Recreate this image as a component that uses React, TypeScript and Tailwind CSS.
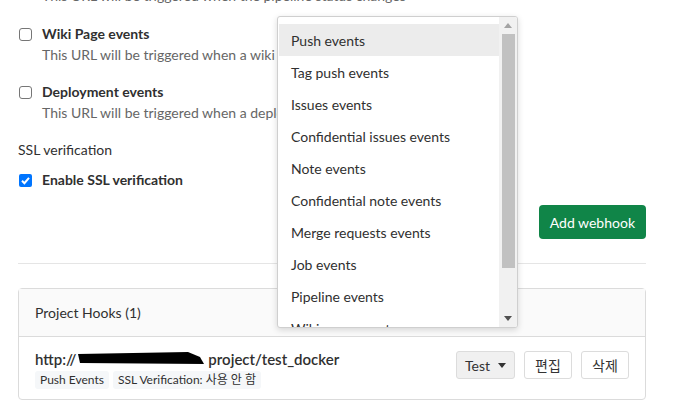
import React from "react";

const font = { fontFamily: 'Lato, "Noto Sans CJK KR", sans-serif' };

function Box({ checked }: { checked?: boolean }) {
  if (checked) {
    return (
      <span className="w-[13px] h-[13px] rounded-[2px] bg-[#0075ff] flex items-center justify-center shrink-0">
        <svg width="11" height="11" viewBox="0 0 11 11">
          <path d="M2 5.8 L4.4 8.2 L9 2.8" stroke="white" strokeWidth="2" fill="none" />
        </svg>
      </span>
    );
  }
  return <span className="w-[13px] h-[13px] rounded-[3px] border border-[#767676] bg-white shrink-0" />;
}

const items = [
  "Push events",
  "Tag push events",
  "Issues events",
  "Confidential issues events",
  "Note events",
  "Confidential note events",
  "Merge requests events",
  "Job events",
  "Pipeline events",
  "Wiki page events",
];

export default function App() {
  return (
    <div className="relative w-[673px] h-[416px] overflow-hidden bg-white text-[14px] text-[#303030]" style={font}>
      <div className="px-[18px] w-[664px]">
        <div className="mt-[-14px] h-[20px] leading-[20px] pl-[24px] text-[#666]">
          This URL will be triggered when the pipeline status changes
        </div>
        <div className="mt-[18px] flex items-center gap-[10px] pl-[1px] h-[20px]">
          <Box />
          <span className="font-bold leading-[20px]">Wiki Page events</span>
        </div>
        <div className="pl-[24px] h-[21px] leading-[21px] text-[#666]">
          This URL will be triggered when a wiki page is created/updated
        </div>
        <div className="mt-[17px] flex items-center gap-[10px] pl-[1px] h-[20px]">
          <Box />
          <span className="font-bold leading-[20px]">Deployment events</span>
        </div>
        <div className="pl-[24px] h-[21px] leading-[21px] text-[#666]">
          This URL will be triggered when a deployment starts
        </div>
        <div className="mt-[17px] h-[20px] leading-[20px]">SSL verification</div>
        <div className="mt-[10px] flex items-center gap-[10px] pl-[1px] h-[20px]">
          <Box checked />
          <span className="font-bold leading-[20px]">Enable SSL verification</span>
        </div>
        <div className="mt-[15px] flex justify-end">
          <button className="h-[34px] px-[11px] rounded-[4px] bg-[#108548] text-white text-[14px]">
            Add webhook
          </button>
        </div>
        <div className="mt-[24px] border-t border-[#e5e5e5]" />
        <div className="mt-[24px] border border-[#dbdbdb] rounded-[4px]">
          <div className="h-[48px] bg-[#fafafa] border-b border-[#dbdbdb] flex items-center px-[16px]">
            Project Hooks (1)
          </div>
          <div className="flex items-center justify-between px-[16px] pt-[12px] pb-[10px]">
            <div>
              <div className="flex items-center h-[20px] font-semibold text-[15px]">
                <span>http://</span>
                <svg width="132" height="20" viewBox="0 0 132 20" className="shrink-0">
                  <path d="M2 5 L112 3 L124 8 L128 15 L4 14 Z" fill="black" />
                </svg>
                <span>project/test_docker</span>
              </div>
              <div className="flex gap-[4px] mt-[2px] text-[12px]">
                <span className="bg-[#f5f7f9] rounded-[3px] px-[5px] h-[18px] leading-[18px]">Push Events</span>
                <span className="bg-[#f5f7f9] rounded-[3px] px-[5px] h-[18px] leading-[18px]">SSL Verification: 사용 안 함</span>
              </div>
            </div>
            <div className="flex items-center gap-[9px] mt-[-8px]">
              <button className="h-[28px] w-[59px] rounded-[3px] border border-[#dcdcdc] bg-[#f0f0f0] flex items-center justify-center gap-[8px] text-[14px] text-[#333]">
                Test
                <svg width="8" height="5" viewBox="0 0 8 5"><path d="M0 0 H8 L4 5 Z" fill="#333" /></svg>
              </button>
              <button className="h-[28px] w-[48px] rounded-[3px] border border-[#dcdcdc] bg-white text-[14px] text-[#333]">편집</button>
              <button className="h-[28px] w-[48px] rounded-[3px] border border-[#dcdcdc] bg-white text-[14px] text-[#333]">삭제</button>
            </div>
          </div>
        </div>
      </div>

      <div className="absolute left-[277px] top-[16px] w-[241px] h-[312px] bg-white border border-[#cfcfcf] rounded-[3px] shadow-[0_2px_6px_rgba(0,0,0,0.15)] overflow-hidden flex">
        <div className="flex-1 pt-[7px] pl-[1px]">
          {items.map((t, i) => (
            <div key={t} className={`h-[32px] flex items-center pl-[12px] text-[#303030] ${i === 0 ? "bg-[#ececec]" : ""}`}>
              {t}
            </div>
          ))}
        </div>
        <div className="w-[18px] bg-[#f1f1f1] flex flex-col items-center">
          <div className="h-[17px] flex items-center justify-center">
            <svg width="8" height="5" viewBox="0 0 8 5"><path d="M0 5 H8 L4 0 Z" fill="#a3a3a3" /></svg>
          </div>
          <div className="w-[13px] h-[234px] bg-[#c1c1c1]" />
          <div className="flex-1" />
          <div className="h-[17px] flex items-center justify-center">
            <svg width="8" height="5" viewBox="0 0 8 5"><path d="M0 0 H8 L4 5 Z" fill="#505050" /></svg>
          </div>
        </div>
      </div>
    </div>
  );
}
